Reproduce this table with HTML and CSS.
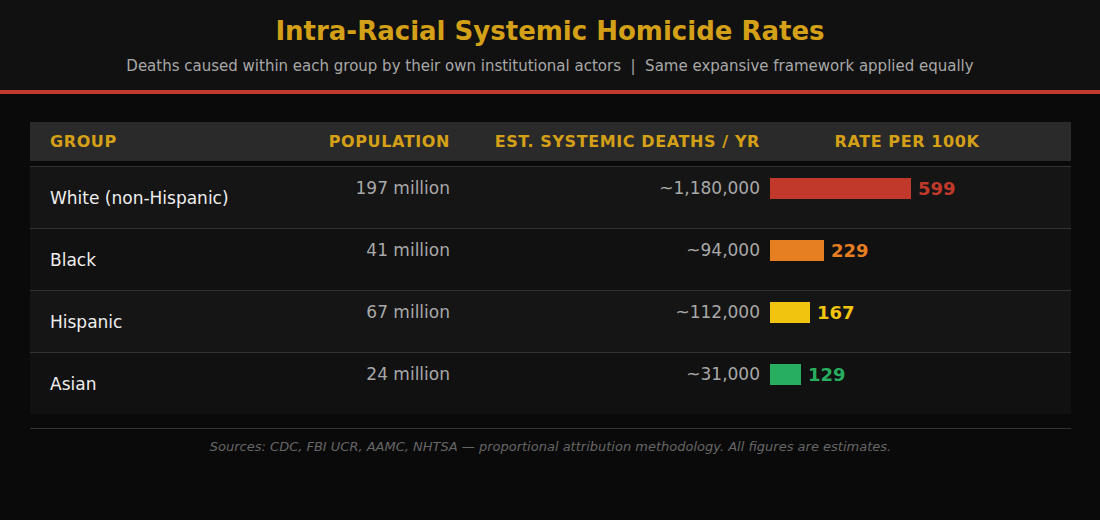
FILE: index.html
```html
<!DOCTYPE html>
<html lang="en">
<head>
<meta charset="utf-8">
<title>Intra-Racial Systemic Homicide Rates</title>
<link rel="stylesheet" href="styles.css">
</head>
<body>
<header class="hero">
  <h1 class="title">Intra-Racial Systemic Homicide Rates</h1>
  <p class="subtitle">Deaths caused within each group by their own institutional actors&nbsp; |&nbsp; Same expansive framework applied equally</p>
</header>
<main class="main">
  <div class="table">
    <div class="row head">
      <div class="cell c-group">GROUP</div>
      <div class="cell c-num">POPULATION</div>
      <div class="cell c-num">EST. SYSTEMIC DEATHS / YR</div>
      <div class="cell c-rate-h">RATE PER 100K</div>
    </div>
    <div class="row body odd">
      <div class="cell c-group name">White (non-Hispanic)</div>
      <div class="cell c-num val">197 million</div>
      <div class="cell c-num val">~1,180,000</div>
      <div class="cell c-rate"><span class="bar red" style="width:141px"></span><span class="rate t-red">599</span></div>
    </div>
    <div class="row body even">
      <div class="cell c-group name">Black</div>
      <div class="cell c-num val">41 million</div>
      <div class="cell c-num val">~94,000</div>
      <div class="cell c-rate"><span class="bar orange" style="width:54px"></span><span class="rate t-orange">229</span></div>
    </div>
    <div class="row body odd">
      <div class="cell c-group name">Hispanic</div>
      <div class="cell c-num val">67 million</div>
      <div class="cell c-num val">~112,000</div>
      <div class="cell c-rate"><span class="bar yellow" style="width:40px"></span><span class="rate t-yellow">167</span></div>
    </div>
    <div class="row body even">
      <div class="cell c-group name">Asian</div>
      <div class="cell c-num val">24 million</div>
      <div class="cell c-num val">~31,000</div>
      <div class="cell c-rate"><span class="bar green" style="width:31px"></span><span class="rate t-green">129</span></div>
    </div>
  </div>
  <footer class="foot">Sources: CDC, FBI UCR, AAMC, NHTSA — proportional attribution methodology. All figures are estimates.</footer>
</main>
</body>
</html>
```
FILE: styles.css
```css
* { box-sizing: border-box; }
html, body { margin: 0; padding: 0; }
body {
  background: #0a0a0a;
  font-family: "DejaVu Sans", Verdana, sans-serif;
  width: 1100px;
  height: 520px;
  overflow: hidden;
}
.hero {
  background: #111111;
  height: 94px;
  border-bottom: 4px solid #c0392b;
  padding-top: 15px;
  text-align: center;
}
.title {
  margin: 0;
  font-size: 26px;
  line-height: 32px;
  font-weight: bold;
  color: #d4a017;
}
.subtitle {
  margin: 10px 0 0;
  font-size: 15px;
  line-height: 18px;
  color: #a8a8a8;
}
.main {
  padding: 28px 29px 0 30px;
}
.row {
  display: grid;
  grid-template-columns: 220px 180px 310px 1fr;
  padding: 0 20px;
}
.head {
  background: #2a2a2a;
  height: 39px;
  align-items: center;
  margin-bottom: 5px;
  font-size: 16px;
  font-weight: bold;
  color: #d4a017;
  letter-spacing: 0.6px;
}
.body {
  height: 62px;
  border-top: 1px solid #333333;
  font-size: 17px;
  line-height: 20px;
}
.odd { background: #151515; }
.even { background: #111111; }
.c-num { text-align: right; }
.c-rate-h { text-align: center; padding: 0 7px 0 10px; }
.body .cell { padding-top: 11px; }
.body .name { align-self: center; padding-top: 0; color: #eeeeee; }
.val { color: #a8a8a8; }
.c-rate {
  display: flex;
  align-items: center;
  gap: 7px;
  padding-left: 10px;
  height: 32px;
}
.bar { display: block; height: 21px; }
.red { background: #c0392b; }
.orange { background: #e67e22; }
.yellow { background: #f1c40f; }
.green { background: #27ae60; }
.rate { font-size: 18px; font-weight: bold; line-height: 21px; }
.t-red { color: #c0392b; }
.t-orange { color: #e67e22; }
.t-yellow { color: #f1c40f; }
.t-green { color: #27ae60; }
.foot {
  margin-top: 14px;
  border-top: 1px solid #333333;
  padding-top: 10px;
  text-align: center;
  font-size: 13px;
  line-height: 16px;
  font-style: italic;
  color: #666666;
}
```
